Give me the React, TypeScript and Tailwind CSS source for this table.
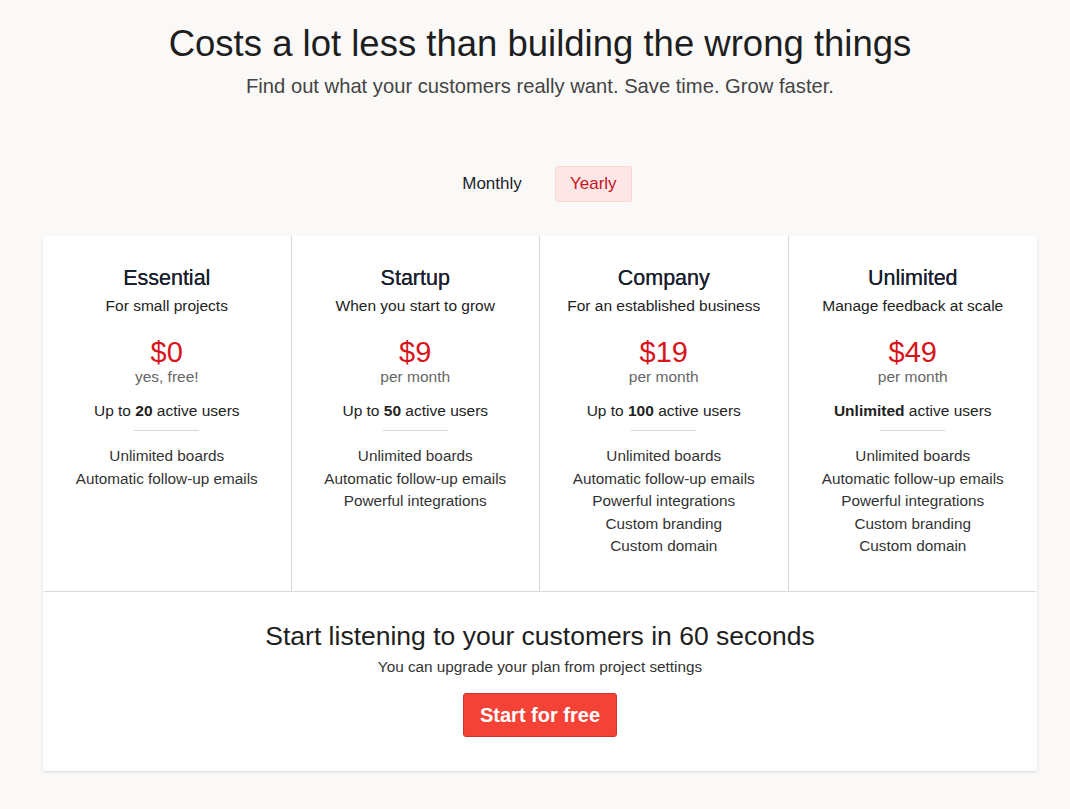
import React from "react";

const plans = [
  {
    name: "Essential",
    tagline: "For small projects",
    price: "$0",
    period: "yes, free!",
    users: "20",
    features: ["Unlimited boards", "Automatic follow-up emails"],
  },
  {
    name: "Startup",
    tagline: "When you start to grow",
    price: "$9",
    period: "per month",
    users: "50",
    features: ["Unlimited boards", "Automatic follow-up emails", "Powerful integrations"],
  },
  {
    name: "Company",
    tagline: "For an established business",
    price: "$19",
    period: "per month",
    users: "100",
    features: [
      "Unlimited boards",
      "Automatic follow-up emails",
      "Powerful integrations",
      "Custom branding",
      "Custom domain",
    ],
  },
  {
    name: "Unlimited",
    tagline: "Manage feedback at scale",
    price: "$49",
    period: "per month",
    users: null,
    features: [
      "Unlimited boards",
      "Automatic follow-up emails",
      "Powerful integrations",
      "Custom branding",
      "Custom domain",
    ],
  },
];

export default function App() {
  return (
    <div
      className="min-h-[809px] bg-[#faf9f7] text-[#222] pt-[22px] pl-[10px] pb-10"
      style={{ fontFamily: '"Liberation Sans", Arial, sans-serif' }}
    >
      {/* heading */}
      <div className="text-center">
        <h1 className="text-[36.5px] leading-[44px] text-[#1e1e1e]">Costs a lot less than building the wrong things</h1>
        <p className="text-[20.2px] leading-[28px] text-[#444] mt-[6px]">
          Find out what your customers really want. Save time. Grow faster.
        </p>
      </div>

      {/* billing toggle */}
      <div className="flex justify-center items-center gap-[17px] mt-[66px] -ml-[2px]">
        <button className="h-9 px-4 text-[17px] text-[#1a1f2e]">Monthly</button>
        <button className="h-9 w-[77px] rounded-[3px] bg-[#fde6e6] text-[17px] text-[#c8141e] border border-[#f8d4d4]">
          Yearly
        </button>
      </div>

      {/* plans card */}
      <div className="mx-[33px] mt-[34px] bg-white rounded-[3px] shadow-[0_1px_3px_rgba(0,0,0,0.12)]">
        <div className="grid grid-cols-4">
          {plans.map((p, i) => (
            <div
              key={p.name}
              className={
                "text-center pt-[28px] h-[355px] " + (i < 3 ? "border-r border-[#d9d9d9]" : "")
              }
            >
              <h2 className="text-[21.5px] leading-[28px] text-[#1a1f2e] [text-shadow:0_0_0.4px_#1a1f2e]">{p.name}</h2>
              <p className="text-[15.5px] leading-[28px] text-[#222]">{p.tagline}</p>
              <div className="mt-[15px] text-[29px] leading-[34px] text-[#d7141a]">{p.price}</div>
              <div className="text-[15.5px] leading-[16px] text-[#666]">{p.period}</div>
              <div className="mt-[15px] text-[15.5px] leading-[22px] text-[#222]">
                {p.users ? (
                  <>
                    Up to <b className="font-bold">{p.users}</b> active users
                  </>
                ) : (
                  <>
                    <b className="font-bold">Unlimited</b> active users
                  </>
                )}
              </div>
              <div className="mx-auto mt-[8px] w-[65px] h-px bg-[#d6d6d6]" />
              <ul className="mt-[14px] text-[15.3px] leading-[22.5px] text-[#333]">
                {p.features.map((f) => (
                  <li key={f}>{f}</li>
                ))}
              </ul>
            </div>
          ))}
        </div>
        <div className="mx-px border-t border-[#d9d9d9] text-center pt-[29px] pb-[34px]">
          <h3 className="text-[26.5px] leading-[30px] text-[#1e1e1e]">Start listening to your customers in 60 seconds</h3>
          <p className="text-[15.3px] leading-[20px] text-[#333] mt-[6px]">You can upgrade your plan from project settings</p>
          <button className="mt-[16px] h-[44px] w-[154px] rounded-[3px] bg-[#f44336] border border-[#d32f2f] text-white text-[20px] font-bold">
            Start for free
          </button>
        </div>
      </div>
    </div>
  );
}
